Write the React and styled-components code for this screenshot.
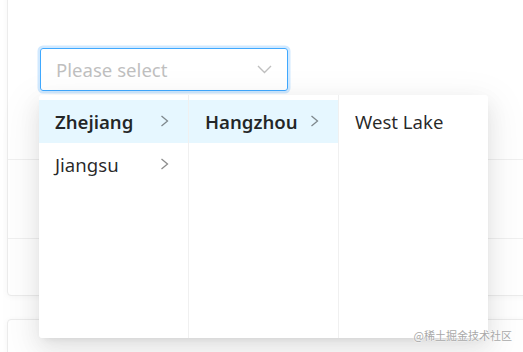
import React from 'react';
import styled, { createGlobalStyle } from 'styled-components';

const GlobalStyle = createGlobalStyle`
  html, body {
    margin: 0;
    padding: 0;
    background: #fff;
    overflow: hidden;
  }
  body {
    font-family: "Noto Sans", "Open Sans", sans-serif;
    color: rgba(0, 0, 0, 0.85);
  }
  * {
    box-sizing: border-box;
  }
`;

const Page = styled.div`
  position: relative;
  width: 523px;
  height: 352px;
  padding-left: 7px;
  overflow: hidden;
`;

const Card = styled.div`
  margin-top: ${({ offset }) => offset}px;
  margin-right: -20px;
  background: #fff;
  border: 1px solid #ececec;
  border-radius: 4px;
  box-shadow: 0 1px 6px rgba(0, 0, 0, 0.04);
`;

const Section = styled.div`
  height: ${({ h }) => h}px;
  padding: ${({ pad }) => pad || '0'};
  border-bottom: ${({ last }) => (last ? 'none' : '1px solid #f0f0f0')};
`;

const SelectWrap = styled.div`
  position: relative;
  width: 248px;
`;

const Selector = styled.div`
  display: flex;
  align-items: center;
  justify-content: space-between;
  height: 43px;
  padding: 0 15px;
  border: 1px solid #40a9ff;
  border-radius: 3px;
  box-shadow: 0 0 0 2.5px rgba(24, 144, 255, 0.2);
  font-size: 18.6px;
  color: #bfbfbf;
`;

const Dropdown = styled.div`
  position: absolute;
  top: 47px;
  left: -1px;
  display: flex;
  height: 243px;
  background: #fff;
  border-radius: 3px;
  box-shadow: 0 4px 8px -5px rgba(0, 0, 0, 0.12),
    0 8px 21px 0 rgba(0, 0, 0, 0.08), 0 12px 37px 10px rgba(0, 0, 0, 0.05);
  z-index: 2;
`;

const Column = styled.ul`
  list-style: none;
  margin: 0;
  padding: 5px 0 0;
  width: ${({ w }) => w}px;
  height: 100%;
  border-right: ${({ last }) => (last ? 'none' : '1px solid #f0f0f0')};
`;

const Item = styled.li`
  display: flex;
  align-items: center;
  justify-content: space-between;
  height: 42.7px;
  padding: 0 19px 0 16px;
  font-size: 18.6px;
  font-weight: ${({ active }) => (active ? 600 : 400)};
  color: rgba(0, 0, 0, 0.85);
  background: ${({ active }) => (active ? '#e6f7ff' : 'transparent')};
  white-space: nowrap;
`;

const Arrow = styled.svg`
  flex: none;
  color: rgba(0, 0, 0, 0.45);
`;

const Watermark = styled.div`
  position: absolute;
  right: 11px;
  bottom: 9px;
  font-family: "Noto Sans CJK SC", sans-serif;
  font-size: 11px;
  color: #a9a9a9;
  text-shadow: 0 0 2px #fff, 0 0 2px #fff;
  z-index: 3;
`;

const RightIcon = () => (
  <Arrow width="9" height="12" viewBox="0 0 9 12">
    <path d="M1.5 1 L7.5 6 L1.5 11" fill="none" stroke="currentColor" strokeWidth="1.3" />
  </Arrow>
);

const DownIcon = () => (
  <svg width="15" height="9" viewBox="0 0 15 9">
    <path d="M1 1 L7.5 7.5 L14 1" fill="none" stroke="#bfbfbf" strokeWidth="1.4" />
  </svg>
);

const columns = [
  [
    { label: 'Zhejiang', active: true, more: true },
    { label: 'Jiangsu', more: true },
  ],
  [{ label: 'Hangzhou', active: true, more: true }],
  [{ label: 'West Lake' }],
];

const App = () => (
  <Page>
    <GlobalStyle />
    <Card offset={-10}>
      <Section h={169} pad="57px 0 0 32px">
        <SelectWrap>
          <Selector>
            <span>Please select</span>
            <DownIcon />
          </Selector>
          <Dropdown>
            {columns.map((col, i) => (
              <Column key={i} w={i === 2 ? 149 : 150} last={i === 2}>
                {col.map((it) => (
                  <Item key={it.label} active={it.active}>
                    <span>{it.label}</span>
                    {it.more && <RightIcon />}
                  </Item>
                ))}
              </Column>
            ))}
          </Dropdown>
        </SelectWrap>
      </Section>
      <Section h={79} />
      <Section h={56} last />
    </Card>
    <Card offset={23}>
      <Section h={60} last />
    </Card>
    <Watermark>@稀土掘金技术社区</Watermark>
  </Page>
);

export default App;
